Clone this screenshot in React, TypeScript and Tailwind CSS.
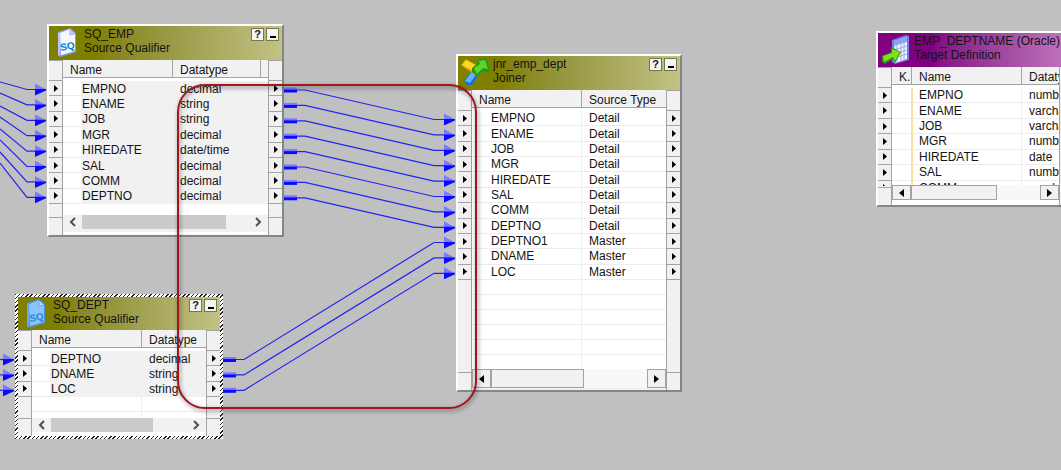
import React from "react";

type Row = { name: string; type: string };
type Connector = { from: [number, number]; to: [number, number] };

const PITCH = 15.4;

const empRows: Row[] = [
  { name: "EMPNO", type: "decimal" },
  { name: "ENAME", type: "string" },
  { name: "JOB", type: "string" },
  { name: "MGR", type: "decimal" },
  { name: "HIREDATE", type: "date/time" },
  { name: "SAL", type: "decimal" },
  { name: "COMM", type: "decimal" },
  { name: "DEPTNO", type: "decimal" },
];

const deptRows: Row[] = [
  { name: "DEPTNO", type: "decimal" },
  { name: "DNAME", type: "string" },
  { name: "LOC", type: "string" },
];

const joinerRows: Row[] = [
  ...empRows.map((r) => ({ name: r.name, type: "Detail" })),
  { name: "DEPTNO1", type: "Master" },
  { name: "DNAME", type: "Master" },
  { name: "LOC", type: "Master" },
];

const targetRows: Row[] = [
  { name: "EMPNO", type: "number" },
  { name: "ENAME", type: "varchar2" },
  { name: "JOB", type: "varchar2" },
  { name: "MGR", type: "number" },
  { name: "HIREDATE", type: "date" },
  { name: "SAL", type: "number" },
  { name: "COMM", type: "number" },
];

/* ---------- icons ---------- */

function QualifierIcon({ selected = false }: { selected?: boolean }) {
  const page = selected ? "#8cc4f7" : "#f4f7ff";
  const edge = selected ? "#4a8fe0" : "#8f9bea";
  return (
    <svg width="20" height="30" viewBox="0 0 20 30" aria-hidden="true">
      <path d="M1 5 13 1l6 5v19L3 30 1 28Z" fill={edge} />
      <path d="M3 6 13 2l5 5v17L4 28Z" fill={page} />
      <path d="M13 2v6l5-1Z" fill={selected ? "#b8dcff" : "#c3cdf8"} stroke={edge} strokeWidth=".6" />
      <path d="M1 5 3 6v23L1 28Z" fill={selected ? "#63a8f0" : "#b9c1f5"} />
      <text
        x="4"
        y="24"
        transform="rotate(-10 4 24)"
        fontFamily="Liberation Sans, sans-serif"
        fontSize="10"
        fontWeight="bold"
        fill={selected ? "#1f86e6" : "#0878c8"}
      >
        SQ
      </text>
    </svg>
  );
}

function JoinerIcon() {
  return (
    <svg width="29" height="29" viewBox="0 0 29 29" aria-hidden="true">
      <path d="M12 12 19 16 11 28 6 28 3 24Z" fill="#1672d8" />
      <path d="M12 13 17 15 9 26 4 24Z" fill="#59b4ff" />
      <path d="M0 8 5 2l9 5 5 1 0 6-5 4-6-4Z" fill="#e09a00" />
      <path d="M1 8 5 3l9 5 4 1-4 6Z" fill="#ffd61e" />
      <path d="M11 11 17 6 16 3l7-2 3 2 3 10-3 3-4-2-6 5-5-4Z" fill="#1f9a14" />
      <path d="M13 11 19 7 18 4l6-1 3 9-5-1-6 6Z" fill="#5ed52b" />
    </svg>
  );
}

function TargetIcon() {
  return (
    <svg width="30" height="31" viewBox="0 0 30 31" aria-hidden="true">
      <path d="M11 6 25 1l3 1v24l-14 4-3-2Z" fill="#6f80e0" />
      <path d="M13 7 26 3v22l-12 4Z" fill="#eef2ff" />
      <path d="M13 7 26 3v5L13 12Z" fill="#8fa2f2" />
      <path
        d="M13 16l13-4M13 20l13-4M13 24l13-4M16 6v22M20 5v22M23 4v22"
        stroke="#8a9bea"
        strokeWidth=".8"
        fill="none"
      />
      <path d="M1 22 10 18v-5l10 5-6 11-2-4-8 5-3-2Z" fill="#2f8f12" />
      <path d="M2 22 11 19v-4l8 3-5 9-2-4-9 5Z" fill="#7fe01f" />
    </svg>
  );
}

/* ---------- window parts ---------- */

function TitleBar(props: {
  icon: React.ReactNode;
  title: string;
  kind: string;
  tone: string;
  buttons?: boolean;
}) {
  return (
    <header className={`flex overflow-hidden ${props.tone}`}>
      <div
        className={`flex shrink-0 items-start justify-center pt-px ${props.buttons ? "w-[35px]" : "w-9"}`}
      >
        {props.icon}
      </div>
      <div className="flex-1 whitespace-nowrap pt-px leading-[14px]">
        <h2>{props.title}</h2>
        <p>{props.kind}</p>
      </div>
      {props.buttons && (
        <div className="flex gap-0.5 pr-[3px] pt-0.5">
          <button
            type="button"
            aria-label="Help"
            className="flex h-[13px] w-[13px] items-center justify-center border border-[#77774a] bg-[#f4f4f4] text-[11px] font-bold leading-none"
          >
            ?
          </button>
          <button
            type="button"
            aria-label="Minimize"
            className="flex h-[13px] w-[13px] items-end justify-center border border-[#77774a] bg-[#f4f4f4] pb-0.5"
          >
            <span className="h-0.5 w-1.5 bg-black" />
          </button>
        </div>
      )}
    </header>
  );
}

function Ports(props: { count: number; rows: string; side: "left" | "right"; clip?: string }) {
  return (
    <div
      className={`flex w-3.5 shrink-0 flex-col border-[#a3a3a3] bg-[#f1f1f1] ${
        props.side === "left" ? "border-r" : "border-l"
      }`}
    >
      <div className="h-[21px] shrink-0 border-y border-[#a3a3a3]" />
      <div className={`shrink-0 overflow-hidden ${props.clip ?? ""}`}>
        <div className={`grid auto-rows-fr ${props.rows}`}>
          {Array.from({ length: props.count }, (_, i) => (
            <div key={i} className="flex items-center justify-center border-b border-[#a3a3a3]">
              <svg width="4" height="7" viewBox="0 0 4 7" aria-hidden="true">
                <path d="M0 0 4 3.5 0 7Z" fill="#000" />
              </svg>
            </div>
          ))}
        </div>
      </div>
      <div className="flex-1" />
      <div className="h-[18px] shrink-0 border-t border-[#a3a3a3]" />
    </div>
  );
}

function ColumnHead(props: { children?: React.ReactNode; last?: boolean; span?: number; pad?: string }) {
  return (
    <th
      scope="col"
      colSpan={props.span}
      className={`overflow-hidden whitespace-nowrap border-b border-[#a3a3a3] bg-[#f1f1f1] p-0 pt-0.5 text-left font-normal leading-[14px] ${
        props.last ? "" : "border-r"
      } ${props.pad ?? "pl-[7px]"}`}
    >
      {props.children}
    </th>
  );
}

function PortTable(props: {
  rows: Row[];
  label: string;
  typeLabel: string;
  body: string;
  shaded?: boolean;
  keyColumn?: boolean;
  spare?: boolean;
}) {
  const cell = props.shaded ? "bg-[#f1f1f1]" : "border-b border-r border-[#ededed]";
  return (
    <div className="bg-white">
      <table aria-label={props.label} className="w-full table-fixed border-separate border-spacing-0">
        <colgroup>
          {props.keyColumn && <col className="w-5" />}
          <col className="w-[18px]" />
          <col className="w-[92px]" />
          <col />
          {props.spare && <col className="w-[7px]" />}
        </colgroup>
        <thead>
          <tr className="h-[18px]">
            {props.keyColumn && <ColumnHead>K.</ColumnHead>}
            <ColumnHead span={2}>Name</ColumnHead>
            <ColumnHead last={!props.spare}>{props.typeLabel}</ColumnHead>
            {props.spare && <ColumnHead last pad="" />}
          </tr>
        </thead>
      </table>
      <div className="h-[3px]" />
      <table
        aria-label={`${props.label} ports`}
        className={`w-full table-fixed border-separate border-spacing-0 ${props.body}`}
      >
        <colgroup>
          <col className={props.keyColumn ? "w-[21px]" : "w-[18px]"} />
          <col className={props.keyColumn ? "w-[109px]" : "w-[92px]"} />
          <col />
        </colgroup>
        <tbody>
          {props.rows.map((r) => (
            <tr key={r.name}>
              <td
                className={`border-b border-[#ededed] p-0 ${
                  props.keyColumn ? "border-r-2 border-r-[#f9dfa0]" : ""
                }`}
              />
              <td
                className={`whitespace-nowrap p-0 leading-[14px] ${props.keyColumn ? "pl-1.5" : "pl-px"} ${cell}`}
              >
                {r.name}
              </td>
              <td className={`overflow-hidden whitespace-nowrap p-0 pl-[7px] leading-[14px] ${cell} border-r-0`}>
                {r.type}
              </td>
            </tr>
          ))}
        </tbody>
      </table>
    </div>
  );
}

function Chevron({ flip = false }: { flip?: boolean }) {
  return (
    <svg width="7" height="10" viewBox="0 0 7 10" aria-hidden="true">
      <path d={flip ? "M1 1l4 4-4 4" : "M6 1 2 5l4 4"} fill="none" stroke="#505050" strokeWidth="2" />
    </svg>
  );
}

function FlatScrollbar({ thumb }: { thumb: string }) {
  return (
    <div className="flex h-3.5 bg-[#f1f1f1]">
      <button type="button" aria-label="Scroll left" className="flex w-[19px] items-center justify-center">
        <Chevron />
      </button>
      <div className="flex-1">
        <div className={`h-full bg-[#cbcbcb] ${thumb}`} />
      </div>
      <button type="button" aria-label="Scroll right" className="flex w-[19px] items-center justify-center">
        <Chevron flip />
      </button>
    </div>
  );
}

function ClassicScrollbar({ thumb, height }: { thumb: string; height: string }) {
  const face = "border border-[#a3a3a3] bg-[#f1f1f1]";
  return (
    <div className={`flex bg-[#f8f8f8] ${height}`}>
      <button type="button" aria-label="Scroll left" className={`flex w-[19px] items-center justify-center ${face}`}>
        <svg width="5" height="8" viewBox="0 0 5 8" aria-hidden="true">
          <path d="M5 0 0 4l5 4Z" />
        </svg>
      </button>
      <div className="flex-1">
        <div className={`h-full ${face} ${thumb}`} />
      </div>
      <button type="button" aria-label="Scroll right" className={`flex w-[19px] items-center justify-center ${face}`}>
        <svg width="5" height="8" viewBox="0 0 5 8" aria-hidden="true">
          <path d="M0 0 5 4 0 8Z" />
        </svg>
      </button>
    </div>
  );
}

function GridLines({ className }: { className: string }) {
  return (
    <div className={`flex ${className}`}>
      <div className="w-[110px] border-r border-[#ededed] bg-[repeating-linear-gradient(to_bottom,#fff_0_14px,#ededed_14px_15px)]" />
      <div className="flex-1 bg-[repeating-linear-gradient(to_bottom,#fff_0_14px,#ededed_14px_15px)]" />
    </div>
  );
}

/* ---------- wires ---------- */

const incomingEmp = [82, 93, 106, 117, 129, 140, 152, 163];

const wires: Connector[] = [
  ...empRows.map((_, i): Connector => ({ from: [284, 90 + i * PITCH], to: [455, 119.5 + i * PITCH] })),
  ...deptRows.map((_, i): Connector => ({ from: [223, 359.5 + i * PITCH], to: [455, 242.5 + i * PITCH] })),
];

function ArrowHead({ x, y }: { x: number; y: number }) {
  return (
    <g>
      <path d={`M${x - 11} ${y - 6}L${x} ${y}H${x - 11}Z`} fill="#7b7bff" />
      <path d={`M${x - 11} ${y - 0.5}H${x}V${y + 1}L${x - 11} ${y + 6}Z`} fill="#0a0aff" />
    </g>
  );
}

function Wires() {
  return (
    <svg
      className="pointer-events-none absolute left-0 top-0"
      width="480"
      height="470"
      viewBox="0 0 480 470"
      aria-hidden="true"
    >
      {wires.map(({ from: [x1, y1], to: [x2, y2] }, i) => (
        <g key={i}>
          <rect x={x1} y={y1 - 2.5} width="13" height="2" fill="#7b7bff" />
          <rect x={x1} y={y1 - 0.5} width="13" height="3" fill="#0a0aff" />
          <path
            d={`M${x1 + 13} ${y1}H${x1 + 21}L${x2 - 21} ${y2}H${x2 - 8}`}
            fill="none"
            stroke="#2323f0"
            strokeWidth="1.2"
          />
          <ArrowHead x={x2} y={y2} />
        </g>
      ))}
      {incomingEmp.map((y, i) => (
        <g key={i}>
          <path d={`M0 ${y}L27 ${89.5 + i * PITCH}H40`} fill="none" stroke="#2323f0" strokeWidth="1.2" />
          <ArrowHead x={46} y={89.5 + i * PITCH} />
        </g>
      ))}
      {deptRows.map((r, i) => (
        <g key={r.name}>
          <path d={`M0 ${359.5 + i * PITCH}H6`} stroke="#2323f0" strokeWidth="1.2" />
          <ArrowHead x={14} y={359.5 + i * PITCH} />
        </g>
      ))}
    </svg>
  );
}

const frame = "absolute border-2 border-b-[#868686] border-l-white border-r-[#868686] border-t-white bg-[#f1f1f1]";
const olive = "bg-linear-to-r from-[#808000] from-20% to-[#c2c284]";

export default function App() {
  return (
    <main className="relative min-h-screen w-full overflow-hidden bg-[#c0c0c0] font-['Liberation_Sans',Arial,sans-serif] text-[12px] text-[#141414]">
      <Wires />

      <section aria-label="SQ_EMP" className={`left-[47px] top-6 w-[237px] ${frame}`}>
        <TitleBar icon={<QualifierIcon />} title="SQ_EMP" kind="Source Qualifier" tone={`h-[34px] ${olive}`} buttons />
        <div className="flex">
          <Ports count={8} rows="h-[123px]" side="left" />
          <div className="min-w-0 flex-1">
            <PortTable rows={empRows} label="SQ_EMP" typeLabel="Datatype" body="h-[123px]" shaded spare />
            <div className="h-[11px] bg-white" />
            <FlatScrollbar thumb="w-[144px]" />
            <div className="mb-px mt-[3px] h-0.5 bg-white" />
          </div>
          <Ports count={8} rows="h-[123px]" side="right" />
        </div>
      </section>

      <section
        aria-label="SQ_DEPT"
        className="absolute left-[15px] top-[294px] w-[208px] bg-[repeating-linear-gradient(135deg,#222_0_1px,#fff_1px_3px)] p-[3px]"
      >
        <TitleBar
          icon={<QualifierIcon selected />}
          title="SQ_DEPT"
          kind="Source Qualifier"
          tone={`h-[33px] ${olive}`}
          buttons
        />
        <div className="flex bg-[#f1f1f1]">
          <Ports count={3} rows="h-[46px]" side="left" />
          <div className="min-w-0 flex-1">
            <PortTable rows={deptRows} label="SQ_DEPT" typeLabel="Datatype" body="h-[46px]" shaded />
            <GridLines className="h-[21px]" />
            <FlatScrollbar thumb="w-[102px]" />
            <div className="h-1 bg-white" />
          </div>
          <Ports count={3} rows="h-[46px]" side="right" />
        </div>
      </section>

      <section aria-label="jnr_emp_dept" className={`left-[456px] top-[54px] w-[226px] ${frame}`}>
        <TitleBar icon={<JoinerIcon />} title="jnr_emp_dept" kind="Joiner" tone={`h-[34px] ${olive}`} buttons />
        <div className="flex">
          <Ports count={11} rows="h-[169px]" side="left" />
          <div className="min-w-0 flex-1">
            <PortTable rows={joinerRows} label="jnr_emp_dept" typeLabel="Source Type" body="h-[169px]" />
            <GridLines className="h-[89px]" />
            <ClassicScrollbar thumb="w-[93px]" height="h-[19px]" />
            <div className="h-0.5" />
          </div>
          <Ports count={11} rows="h-[169px]" side="right" />
        </div>
      </section>

      <section aria-label="EMP_DEPTNAME" className={`left-[876px] top-[31px] w-[215px] ${frame}`}>
        <TitleBar
          icon={<TargetIcon />}
          title="EMP_DEPTNAME (Oracle)"
          kind="Target Definition"
          tone="h-[34px] bg-linear-to-r from-[#800080] from-25% to-[#c884c8]"
        />
        <div className="flex h-[138px] overflow-hidden">
          <Ports count={7} rows="h-[108px]" side="left" clip="h-[98px]" />
          <div className="w-[167px] shrink-0">
            <div className="h-[118px] overflow-hidden">
              <PortTable rows={targetRows} label="EMP_DEPTNAME" typeLabel="Datatype" body="h-[108px]" keyColumn />
            </div>
            <ClassicScrollbar thumb="w-[86px]" height="h-[15px]" />
            <div className="h-[5px] bg-white" />
          </div>
          <div className="flex-1 border-l border-[#a3a3a3] bg-[#f1f1f1]" />
        </div>
      </section>

      <div
        aria-hidden="true"
        className="pointer-events-none absolute left-[177px] top-[84px] h-[325px] w-[300px] rounded-[28px] border-2 border-[#a3161f] drop-shadow-[1px_2px_2px_rgba(0,0,0,0.5)]"
      />
    </main>
  );
}
